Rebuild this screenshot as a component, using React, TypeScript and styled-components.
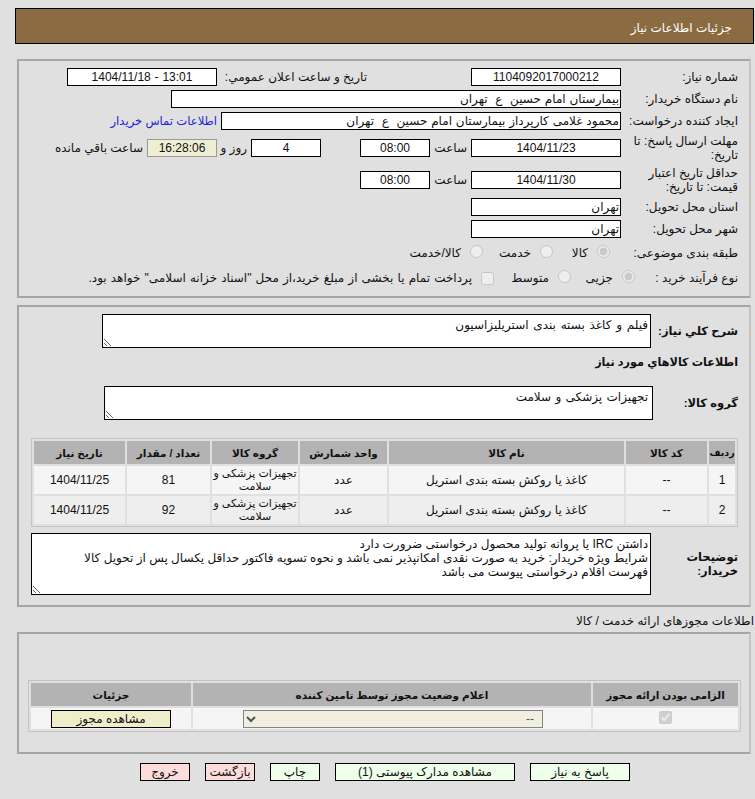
import React from 'react';
import styled, { createGlobalStyle } from 'styled-components';

const GlobalStyle = createGlobalStyle`
  html, body {
    margin: 0;
    padding: 0;
    background: #e0e0e0;
  }
  body {
    font-family: "Liberation Sans", "DejaVu Sans", sans-serif;
    font-size: 12px;
    color: #111;
  }
`;

const Page = styled.div`
  direction: rtl;
  padding: 8px 1px 0 15px;
  height: 791px;
  overflow: hidden;
  box-sizing: content-box;
`;

const TitleBar = styled.div`
  height: 34px;
  line-height: 38px;
  background: #8b6b41;
  border: 1px solid #000;
  color: #fff;
  padding-right: 21px;
`;

const Panel = styled.div<{ $top: number; $pad: string }>`
  margin: ${p => p.$top}px 3px 0 2px;
  padding: ${p => p.$pad};
  border: 2px solid;
  border-color: #a6a6a6 #c4c4c4 #a6a6a6 #a6a6a6;
  box-sizing: border-box;
`;

const Row = styled.div<{ $top?: number }>`
  display: flex;
  align-items: center;
  margin-top: ${p => p.$top ?? 4}px;
`;

const Label = styled.div<{ $w?: number; $bold?: boolean }>`
  width: ${p => p.$w ?? 117}px;
  flex: none;
  line-height: 14px;
  font-weight: ${p => (p.$bold ? 700 : 400)};
  font-size: ${p => (p.$bold ? 11.5 : 12)}px;
`;

const Field = styled.div<{ $w: number; $center?: boolean; $tint?: boolean }>`
  width: ${p => p.$w}px;
  height: 18px;
  line-height: 17px;
  flex: none;
  box-sizing: border-box;
  border: 1px solid ${p => (p.$tint ? '#999' : '#000')};
  background: ${p => (p.$tint ? '#f0eed2' : '#fff')};
  text-align: ${p => (p.$center ? 'center' : 'right')};
  padding: 0 1px;
  white-space: pre;
  word-spacing: 0.5px;
  overflow: hidden;
`;

const Caption = styled.div<{ $w?: number; $inset?: number; $start?: number }>`
  ${p => (p.$w ? `width: ${p.$w}px;` : '')}
  flex: none;
  margin-right: ${p => p.$start ?? 0}px;
  padding-right: ${p => p.$inset ?? 4}px;
  box-sizing: border-box;
`;

const ContactLink = styled.a`
  color: #2222dd;
  font-size: 11.6px;
  margin-right: 4px;
  text-decoration: none;
`;

const Choice = styled.label<{ $w: number }>`
  width: ${p => p.$w}px;
  height: 20px;
  flex: none;
  display: flex;
  align-items: center;
  gap: 9px;
  word-spacing: 0.8px;
`;

const Radio = styled.input.attrs({ type: 'radio', disabled: true })`
  width: 13px;
  height: 13px;
  margin: 0 0 4px;
  flex: none;
`;

const Tick = styled.input.attrs({ type: 'checkbox', disabled: true })`
  width: 13px;
  height: 13px;
  margin: 0;
  flex: none;
`;

const Area = styled.textarea<{ $w: number; $h: number; $inset?: number; $spread?: number }>`
  display: block;
  width: ${p => p.$w}px;
  height: ${p => p.$h}px;
  flex: none;
  box-sizing: border-box;
  border: 1px solid #000;
  border-radius: 0;
  background: #fff;
  padding: 3px ${p => p.$inset ?? 2}px 2px 1px;
  margin: 0;
  font: inherit;
  line-height: 14px;
  word-spacing: ${p => p.$spread ?? 0}px;
  color: #111;
  direction: rtl;
  outline: none;
`;

const Heading = styled.div`
  font-weight: 700;
  font-size: 11.25px;
  height: 14px;
  line-height: 14px;
  margin-top: 7px;
`;

const Grid = styled.table<{ $w: number; $top: number }>`
  width: ${p => p.$w}px;
  margin-top: ${p => p.$top}px;
  border: 1px solid #c4c4c4;
  border-spacing: 2px;
  table-layout: fixed;
`;

const Head = styled.th<{ $w?: number; $size?: number }>`
  ${p => (p.$w ? `width: ${p.$w}px;` : '')}
  height: 23px;
  padding: 0;
  background: #b3b3b3;
  font-weight: 700;
  font-size: ${p => p.$size ?? 10.5}px;
  text-align: center;
  white-space: nowrap;
`;

const Cell = styled.td<{ $even?: boolean; $h?: number }>`
  height: ${p => p.$h ?? 28}px;
  padding: 0;
  background: ${p => (p.$even ? '#eeeeee' : '#f5f5f5')};
  text-align: center;
  line-height: 13px;
`;

const GroupCell = styled(Cell)`
  font-size: 11px;
  white-space: nowrap;
`;

const ListCaption = styled.div`
  margin-top: 6px;
  height: 17px;
  line-height: 17px;
`;

const Picker = styled.select`
  display: block;
  width: 300px;
  height: 18px;
  margin: 0 48px 0 0;
  padding: 0 4px;
  box-sizing: border-box;
  border: 1px solid #555;
  border-radius: 0;
  background: #f0eed8;
  font: inherit;
  color: #111;
`;

const Action = styled.button<{ $w: number; $tone: 'green' | 'pink' | 'sand' }>`
  width: ${p => p.$w}px;
  height: 18px;
  flex: none;
  padding: 0;
  border: 1px solid #000;
  border-radius: 0;
  background: ${p =>
    p.$tone === 'green' ? '#eeffea' : p.$tone === 'pink' ? '#ffdcdc' : '#eeeecb'};
  font: inherit;
  color: #111;
  line-height: 16px;
`;

const CenterAction = styled(Action)`
  display: block;
  margin: 0 auto;
`;

const Actions = styled.div`
  display: flex;
  gap: 15px;
  margin-top: 9px;
  padding-right: 124px;
`;

const items = [
  { id: 1, qty: 81 },
  { id: 2, qty: 92 },
];

const App: React.FC = () => (
  <Page>
    <GlobalStyle />
    <TitleBar>جزئیات اطلاعات نیاز</TitleBar>

    <Panel $top={15} $pad="7px 11px 8px 0">
      <Row $top={0}>
        <Label>شماره نیاز:</Label>
        <Field $w={150} $center>1104092017000212</Field>
        <Caption $w={150} $inset={0} $start={104}>تاریخ و ساعت اعلان عمومي:</Caption>
        <Field $w={150} $center>13:01 - 1404/11/18</Field>
      </Row>
      <Row>
        <Label>نام دستگاه خریدار:</Label>
        <Field $w={450}>بیمارستان امام حسین  ع  تهران</Field>
      </Row>
      <Row>
        <Label>ایجاد کننده درخواست:</Label>
        <Field $w={400}>محمود غلامی کارپرداز بیمارستان امام حسین  ع  تهران</Field>
        <ContactLink href="#">اطلاعات تماس خریدار</ContactLink>
      </Row>
      <Row>
        <Label>مهلت ارسال پاسخ: تا تاریخ:</Label>
        <Field $w={150} $center>1404/11/23</Field>
        <Caption $w={41}>ساعت</Caption>
        <Field $w={70} $center>08:00</Field>
        <Caption $w={39} />
        <Field $w={70} $center>4</Field>
        <Caption $w={34}>روز و</Caption>
        <Field $w={70} $center $tint>16:28:06</Field>
        <Caption>ساعت باقي مانده</Caption>
      </Row>
      <Row>
        <Label>حداقل تاریخ اعتبار قیمت: تا تاریخ:</Label>
        <Field $w={150} $center>1404/11/30</Field>
        <Caption $w={41}>ساعت</Caption>
        <Field $w={70} $center>08:00</Field>
      </Row>
      <Row>
        <Label>استان محل تحویل:</Label>
        <Field $w={150}>تهران</Field>
      </Row>
      <Row>
        <Label>شهر محل تحویل:</Label>
        <Field $w={150}>تهران</Field>
      </Row>
      <Row $top={5}>
        <Label $w={128}>طبقه بندی موضوعی:</Label>
        <Choice $w={57}><Radio name="kind" defaultChecked />کالا</Choice>
        <Choice $w={70}><Radio name="kind" />خدمت</Choice>
        <Choice $w={90}><Radio name="kind" />کالا/خدمت</Choice>
      </Row>
      <Row $top={5}>
        <Label $w={103}>نوع فرآیند خرید :</Label>
        <Choice $w={64}><Radio name="mode" defaultChecked />جزیی</Choice>
        <Choice $w={77}><Radio name="mode" />متوسط</Choice>
        <Choice $w={420}>
          <Tick />
          پرداخت تمام یا بخشی از مبلغ خرید،از محل "اسناد خزانه اسلامی" خواهد بود.
        </Choice>
      </Row>
    </Panel>

    <Panel $top={7} $pad="7px 11px 10px 11px">
      <Row $top={0}>
        <Label $w={87} $bold>شرح کلي نیاز:</Label>
        <Area $w={549} $h={34} $spread={1.4} readOnly defaultValue="فیلم و کاغذ بسته بندی استریلیزاسیون" />
      </Row>
      <Heading>اطلاعات کالاهاي مورد نیاز</Heading>
      <Row $top={17}>
        <Label $w={85} $bold>گروه کالا:</Label>
        <Area $w={549} $h={34} $inset={4} $spread={1} readOnly defaultValue="تجهیزات پزشکی و سلامت" />
      </Row>
      <Grid $w={707} $top={18}>
        <thead>
          <tr>
            <Head $w={26} $size={9.5}>ردیف</Head>
            <Head $w={81}>کد کالا</Head>
            <Head $w={235}>نام کالا</Head>
            <Head $w={87}>واحد شمارش</Head>
            <Head $w={86}>گروه کالا</Head>
            <Head $w={83}>تعداد / مقدار</Head>
            <Head>تاریخ نیاز</Head>
          </tr>
        </thead>
        <tbody>
          {items.map(item => (
            <tr key={item.id}>
              <Cell $even={item.id === 2}>{item.id}</Cell>
              <Cell $even={item.id === 2}>--</Cell>
              <Cell $even={item.id === 2}>کاغذ یا روکش بسته بندی استریل</Cell>
              <Cell $even={item.id === 2}>عدد</Cell>
              <GroupCell $even={item.id === 2}>تجهیزات پزشکی و<br />سلامت</GroupCell>
              <Cell $even={item.id === 2}>{item.qty}</Cell>
              <Cell $even={item.id === 2}>1404/11/25</Cell>
            </tr>
          ))}
        </tbody>
      </Grid>
      <Row $top={6}>
        <Label $w={87} $bold>توضیحات خریدار:</Label>
        <Area
          $w={620}
          $h={62}
          readOnly
          defaultValue={'داشتن IRC یا پروانه تولید محصول درخواستی ضرورت دارد\nشرایط ویژه خریدار: خرید به صورت نقدی امکانپذیر نمی باشد و نحوه تسویه فاکتور حداقل یکسال پس از تحویل کالا\nفهرست اقلام درخواستی پیوست می باشد'}
        />
      </Row>
    </Panel>

    <ListCaption>اطلاعات مجوزهای ارائه خدمت / کالا</ListCaption>

    <Panel $top={2} $pad="46px 8px 20px 9px">
      <Grid $w={713} $top={0}>
        <thead>
          <tr>
            <Head $w={145}>الزامی بودن ارائه مجوز</Head>
            <Head $w={398}>اعلام وضعیت مجوز توسط تامین کننده</Head>
            <Head>جزئیات</Head>
          </tr>
        </thead>
        <tbody>
          <tr>
            <Cell $h={21}><Tick defaultChecked /></Cell>
            <Cell $h={21}>
              <Picker disabled defaultValue="--">
                <option value="--">--</option>
              </Picker>
            </Cell>
            <Cell $h={21}><CenterAction $w={120} $tone="sand">مشاهده مجوز</CenterAction></Cell>
          </tr>
        </tbody>
      </Grid>
    </Panel>

    <Actions>
      <Action $w={100} $tone="green">پاسخ به نیاز</Action>
      <Action $w={180} $tone="green">مشاهده مدارک پیوستی (1)</Action>
      <Action $w={50} $tone="green">چاپ</Action>
      <Action $w={50} $tone="pink">بازگشت</Action>
      <Action $w={50} $tone="pink">خروج</Action>
    </Actions>
  </Page>
);

export default App;
